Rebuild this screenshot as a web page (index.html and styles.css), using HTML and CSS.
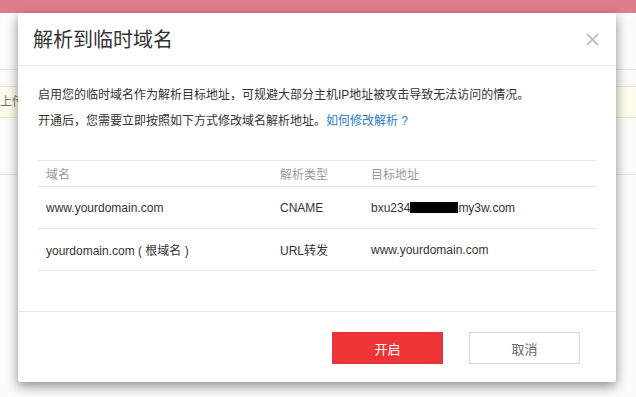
FILE: index.html
```html
<!DOCTYPE html>
<html lang="zh-CN">
<head>
    <meta charset="UTF-8">
    <meta name="viewport" content="width=device-width, initial-scale=1.0">
    <title>解析到临时域名</title>
    <link rel="stylesheet" href="styles.css">
</head>
<body>
    <!-- page behind the dialog -->
    <div class="page">
        <div class="topbar"></div>
        <div class="subnav"></div>
        <div class="notice">上传</div>
        <div class="list-head"></div>
    </div>

    <div class="modal">
        <div class="modal-header">
            <h3 class="modal-title">解析到临时域名</h3>
            <span class="close">
                <svg width="13" height="13" viewBox="0 0 13 13">
                    <path d="M1 1L12 12M12 1L1 12" stroke="#c4c4c4" stroke-width="2" fill="none"/>
                </svg>
            </span>
        </div>
        <div class="modal-body">
            <p>启用您的临时域名作为解析目标地址，可规避大部分主机IP地址被攻击导致无法访问的情况。</p>
            <p>开通后，您需要立即按照如下方式修改域名解析地址。<a href="#" class="link">如何修改解析 ?</a></p>
            <table class="dns-table">
                <thead>
                    <tr>
                        <th class="col-domain">域名</th>
                        <th class="col-type">解析类型</th>
                        <th>目标地址</th>
                    </tr>
                </thead>
                <tbody>
                    <tr>
                        <td>www.yourdomain.com</td>
                        <td>CNAME</td>
                        <td>bxu234<span class="masked"></span>my3w.com</td>
                    </tr>
                    <tr>
                        <td>yourdomain.com ( 根域名 )</td>
                        <td>URL转发</td>
                        <td>www.yourdomain.com</td>
                    </tr>
                </tbody>
            </table>
        </div>
        <div class="modal-footer">
            <button class="btn btn-primary">开启</button>
            <button class="btn btn-default">取消</button>
        </div>
    </div>
</body>
</html>
```

FILE: styles.css
```css
body {
    margin: 0;
    font-family: "Liberation Sans", "Noto Sans CJK SC", sans-serif;
    font-size: 12px;
    color: #333;
    background-color: #fbfbfb;
    height: 397px;
    overflow: hidden;
}
.page {
    width: 636px;
}
.topbar {
    height: 13px;
    background: #e07d8a;
}
.subnav {
    height: 56px;
    border-bottom: 1px solid #e6e6e6;
}
.notice {
    margin-top: 16px;
    height: 30px;
    line-height: 30px;
    background: #fefcea;
    border-top: 1px solid #eee9cc;
    border-bottom: 1px solid #eee9cc;
    color: #777;
    font-size: 12px;
}
.list-head {
    height: 56px;
    border-bottom: 1px solid #e6e6e6;
}
.modal {
    position: absolute;
    top: 13px;
    left: 18px;
    width: 598px;
    background: #fff;
    border-radius: 3px;
    box-shadow: 0 4px 12px rgba(0, 0, 0, 0.45);
}
.modal-header {
    position: relative;
    padding: 16px 15px 14px;
    border-bottom: 1px solid #e5e5e5;
}
.modal-title {
    margin: 0;
    font-size: 20px;
    font-weight: normal;
    line-height: 22px;
    color: #333;
}
.close {
    position: absolute;
    top: 20px;
    right: 17px;
    width: 13px;
    height: 13px;
    cursor: pointer;
}
.close svg {
    display: block;
}
.modal-body {
    padding: 20px 20px 40px;
}
.modal-body p {
    margin: 0 0 8px;
    line-height: 18px;
}
.link {
    color: #2a7ad2;
    text-decoration: none;
}
.dns-table {
    margin-top: 30px;
    width: 558px;
    border-collapse: collapse;
    table-layout: fixed;
}
.dns-table th {
    height: 25px;
    padding: 0 8px;
    text-align: left;
    font-weight: normal;
    color: #999;
    border-top: 1px solid #e5e5e5;
    border-bottom: 1px solid #e5e5e5;
}
.dns-table td {
    height: 41px;
    padding: 0 8px;
    border-bottom: 1px solid #e5e5e5;
    white-space: nowrap;
}
.col-domain {
    width: 218px;
}
.col-type {
    width: 75px;
}
.masked {
    display: inline-block;
    width: 48px;
    height: 11px;
    background: #000;
    vertical-align: -1px;
}
.modal-footer {
    display: flex;
    justify-content: flex-end;
    gap: 26px;
    padding: 20px 36px 18px;
    border-top: 1px solid #e5e5e5;
}
.btn {
    width: 111px;
    height: 32px;
    font-family: "Liberation Sans", "Noto Sans CJK SC", sans-serif;
    font-size: 13px;
    border-radius: 0;
    cursor: pointer;
}
.btn-primary {
    background: #ee3437;
    border: 1px solid #d9393b;
    color: #fff;
}
.btn-default {
    background: #fff;
    border: 1px solid #d6d6d6;
    color: #666;
}
```
